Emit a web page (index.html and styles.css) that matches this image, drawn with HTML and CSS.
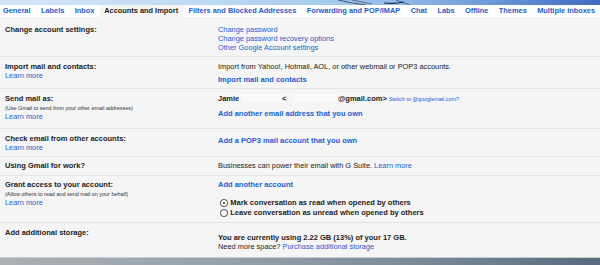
FILE: index.html
```html
<!DOCTYPE html>
<html>
<head>
<meta charset="utf-8">
<link rel="stylesheet" href="styles.css">
</head>
<body>
<div class="page">
  <div class="sky">
    <svg class="sketch" width="600" height="5" viewBox="0 0 600 5">
      <path d="M338 0 Q350 3 366 5" stroke="#2b3550" stroke-width="0.8" fill="none"/>
      <path d="M352 0 Q362 2 372 4" stroke="#2b3550" stroke-width="0.6" fill="none"/>
      <path d="M384 3 Q395 4 404 2" stroke="#1f2a44" stroke-width="1.2" fill="none"/>
      <path d="M396 0 L410 5" stroke="#2b3550" stroke-width="0.6" fill="none"/>
    </svg>
  </div>
  <nav class="tabs">
    <a class="tab">General</a>
    <a class="tab">Labels</a>
    <a class="tab">Inbox</a>
    <a class="tab active">Accounts and Import</a>
    <a class="tab">Filters and Blocked Addresses</a>
    <a class="tab">Forwarding and POP/IMAP</a>
    <a class="tab">Chat</a>
    <a class="tab">Labs</a>
    <a class="tab">Offline</a>
    <a class="tab">Themes</a>
    <a class="tab">Multiple inboxes</a>
  </nav>
  <main class="content">
    <section class="row r1">
      <div class="lbl"><div class="ttl">Change account settings:</div></div>
      <div class="val">
        <a class="lnk">Change password</a>
        <a class="lnk">Change password recovery options</a>
        <a class="lnk">Other Google Account settings</a>
      </div>
    </section>
    <section class="row r2">
      <div class="lbl"><div class="ttl">Import mail and contacts:</div><a class="lnk">Learn more</a></div>
      <div class="val">
        <div class="txt">Import from Yahoo!, Hotmail, AOL, or other webmail or POP3 accounts.</div>
        <a class="lnk bold gap4">Import mail and contacts</a>
      </div>
    </section>
    <section class="row r3">
      <div class="lbl"><div class="ttl">Send mail as:</div><div class="small">(Use Gmail to send from your other email addresses)</div><a class="lnk">Learn more</a></div>
      <div class="val">
        <div class="txt bold"><span class="name">Jamie</span><span class="redact r-a"></span><span class="lt">&lt;</span><span class="redact r-b"></span><span class="mail">@gmail.com&gt;</span> <a class="lnk-s">Switch to @googlemail.com?</a></div>
        <a class="lnk bold gap5">Add another email address that you own</a>
      </div>
    </section>
    <section class="row r4">
      <div class="lbl"><div class="ttl">Check email from other accounts:</div><a class="lnk">Learn more</a></div>
      <div class="val">
        <a class="lnk bold gap3">Add a POP3 mail account that you own</a>
      </div>
    </section>
    <section class="row r5">
      <div class="lbl"><div class="ttl">Using Gmail for work?</div></div>
      <div class="val">
        <div class="txt">Businesses can power their email with G Suite. <a class="lnk-i">Learn more</a></div>
      </div>
    </section>
    <section class="row r6">
      <div class="lbl"><div class="ttl">Grant access to your account:</div><div class="small">(Allow others to read and send mail on your behalf)</div><a class="lnk">Learn more</a></div>
      <div class="val">
        <a class="lnk bold">Add another account</a>
        <div class="radios">
          <div class="radio"><span class="dot on"></span>Mark conversation as read when opened by others</div>
          <div class="radio"><span class="dot"></span>Leave conversation as unread when opened by others</div>
        </div>
      </div>
    </section>
    <section class="row r7">
      <div class="lbl"><div class="ttl">Add additional storage:</div></div>
      <div class="val">
        <div class="txt bold gap5">You are currently using 2.22 GB (13%) of your 17 GB.</div>
        <div class="txt">Need more space? <a class="lnk-i">Purchase additional storage</a></div>
      </div>
    </section>
  </main>
  <div class="sea"></div>
</div>
</body>
</html>
```

FILE: styles.css
```css
html, body {
  margin: 0;
  padding: 0;
}
body {
  width: 600px;
  height: 265px;
  overflow: hidden;
  font-family: "Liberation Sans", Arial, sans-serif;
  color: #222;
  background: #f5f5f5;
}
.page {
  display: flex;
  flex-direction: column;
  width: 600px;
}
.sky {
  height: 5px;
  background: linear-gradient(90deg, #d3e6f7 0%, #c2dcf4 30%, #aacdf0 52%, #8fb7e6 68%, #6b98d8 82%, #3e6bbf 100%);
  overflow: hidden;
}
.sketch {
  display: block;
}
.tabs {
  display: flex;
  height: 12px;
  background: #fff;
  padding-left: 0;
}
.tab {
  padding: 0 5.2px;
  font-size: 7.4px;
  line-height: 12px;
  font-weight: bold;
  color: #1f5bc9;
  white-space: nowrap;
}
.tab:first-child {
  padding-left: 3px;
}
.tab.active {
  background: #f5f5f5;
  color: #222;
  padding: 0 5.2px 0 4.6px;
}
.content {
  background: #f5f5f5;
  font-size: 7.4px;
  line-height: 9px;
}
.row {
  display: grid;
  grid-template-columns: 218px 1fr;
  padding: 4.5px 0 4.8px;
  border-bottom: 1px solid #e4e4e4;
}
.lbl {
  padding-left: 5px;
  display: flex;
  flex-direction: column;
  align-items: flex-start;
}
.val {
  display: flex;
  flex-direction: column;
  align-items: flex-start;
  white-space: nowrap;
}
.ttl {
  font-weight: bold;
  font-size: 7.5px;
  color: #222;
}
.small {
  font-size: 5.45px;
  line-height: 8px;
  padding-top: 1px;
  color: #333;
  white-space: nowrap;
}
.lnk {
  color: #2160d3;
  display: block;
}
.lnk-i {
  color: #2160d3;
}
.lnk-s {
  color: #2160d3;
  font-size: 5.45px;
  font-weight: normal;
}
.bold {
  font-weight: bold;
  font-size: 7.5px;
}
.txt {
  color: #222;
}
.gap3 { margin-top: 2.7px; }
.gap4 { margin-top: 4px; }
.gap5 { margin-top: 5px; }
.r1 {
  padding-top: 7.5px;
  padding-bottom: 4.5px;
}
.r3 {
  padding-bottom: 7.3px;
}
.r5 {
  padding-top: 3.8px;
  padding-bottom: 4.5px;
}
.r6 {
  padding-bottom: 4.4px;
}
.r7 {
  padding-bottom: 5.8px;
  border-bottom: none;
}
.name {
  display: inline-block;
  width: 25px;
}
.redact {
  display: inline-block;
  height: 8px;
  vertical-align: -1px;
  background: #fbfbfb;
}
.r-a {
  width: 39px;
}
.lt {
  display: inline-block;
  width: 3px;
  margin-right: 9px;
}
.r-b {
  width: 42px;
  margin-right: 2px;
}
.radios {
  margin-top: 8.8px;
  display: flex;
  flex-direction: column;
}
.radio {
  display: flex;
  align-items: center;
  line-height: 10px;
  font-weight: bold;
  font-size: 7.5px;
  color: #222;
}
.dot {
  width: 5.5px;
  height: 5.5px;
  border: 0.8px solid #444;
  border-radius: 50%;
  background: #fff;
  margin: 0 2.6px 0 2.2px;
  position: relative;
  box-sizing: content-box;
}
.dot.on::after {
  content: "";
  position: absolute;
  left: 1.4px;
  top: 1.4px;
  width: 2.7px;
  height: 2.7px;
  border-radius: 50%;
  background: #222;
}
.sea {
  height: 12px;
  border-top: 1px solid #c9cdd0;
  background: linear-gradient(90deg, #aab0b4 0%, #9ba5ad 30%, #8895a0 55%, #6e8191 80%, #566b7e 100%);
}
```
